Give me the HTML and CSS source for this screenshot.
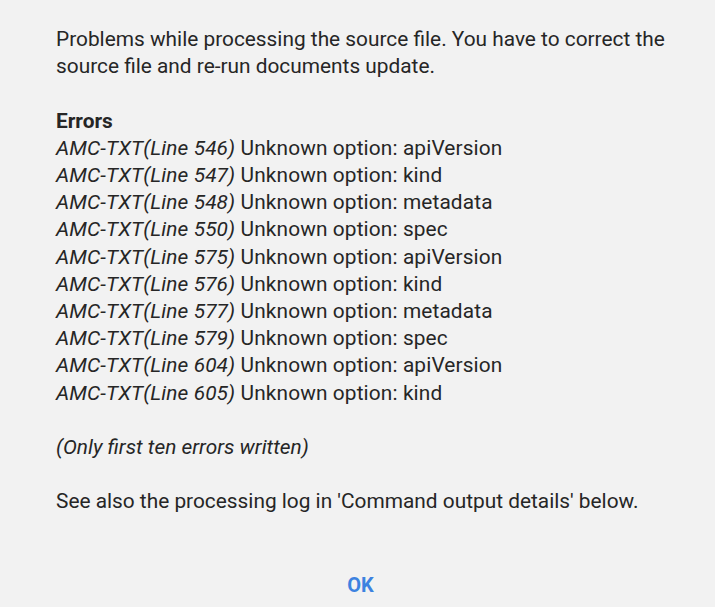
FILE: index.html
```html
<!DOCTYPE html>
<html>
<head>
  <link rel="stylesheet" href="styles.css">
</head>
<body>
  <div class="dialog">
    <div class="message">
      <p>Problems while processing the source file. You have to correct the source file and re-run documents update.</p>

      <div class="errors">
        <strong>Errors</strong>
        <div><em>AMC-TXT(Line 546)</em> Unknown option: apiVersion</div>
        <div><em>AMC-TXT(Line 547)</em> Unknown option: kind</div>
        <div><em>AMC-TXT(Line 548)</em> Unknown option: metadata</div>
        <div><em>AMC-TXT(Line 550)</em> Unknown option: spec</div>
        <div><em>AMC-TXT(Line 575)</em> Unknown option: apiVersion</div>
        <div><em>AMC-TXT(Line 576)</em> Unknown option: kind</div>
        <div><em>AMC-TXT(Line 577)</em> Unknown option: metadata</div>
        <div><em>AMC-TXT(Line 579)</em> Unknown option: spec</div>
        <div><em>AMC-TXT(Line 604)</em> Unknown option: apiVersion</div>
        <div><em>AMC-TXT(Line 605)</em> Unknown option: kind</div>
      </div>

      <p><em>(Only first ten errors written)</em></p>

      <p>See also the processing log in 'Command output details' below.</p>
    </div>

    <div class="actions">
      <button class="ok">OK</button>
    </div>
  </div>
</body>
</html>
```

FILE: styles.css
```css
body {
  margin: 0;
  background-color: #f2f2f2;
  font-family: Roboto, "Liberation Sans", sans-serif;
  color: #262626;
}
.dialog {
  width: 715px;
  height: 607px;
  display: flex;
  flex-direction: column;
}
.message {
  padding: 26px 40px 0 56px;
  font-size: 20.85px;
  line-height: 27.2px;
}
.message p {
  margin: 0 0 27.2px 0;
}
.errors {
  margin-bottom: 27.2px;
}
.errors div {
  letter-spacing: 0.12px;
}
.errors strong {
  display: block;
  font-weight: 700;
}
.actions {
  margin-top: auto;
  display: flex;
  justify-content: center;
  padding: 0 0 4px 6px;
}
.ok {
  border: none;
  background: none;
  font-family: Roboto, "Liberation Sans", sans-serif;
  font-size: 20px;
  font-weight: 700;
  color: #3d82e0;
  padding: 6px 16px;
  cursor: pointer;
}
```
